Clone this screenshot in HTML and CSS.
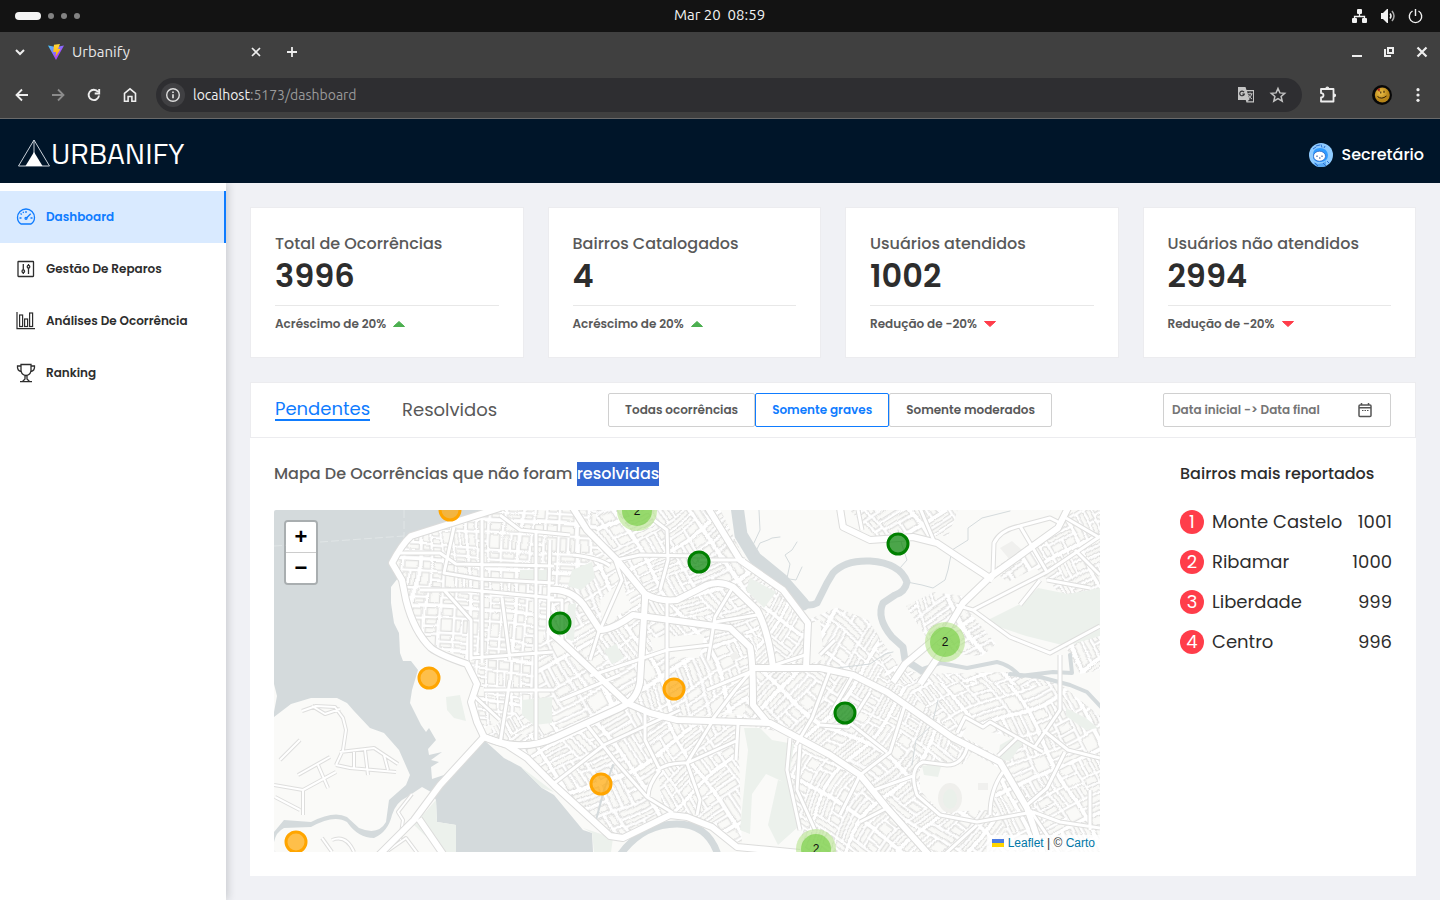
FILE: index.html
```html
<!DOCTYPE html>
<html lang="pt-BR">
<head>
<meta charset="utf-8">
<meta name="viewport" content="width=device-width, initial-scale=1">
<title>Urbanify</title>
<link rel="stylesheet" href="styles.css">
</head>
<body>
<div class="system-bar">
  <div class="workspaces"><span class="workspace workspace-active"></span><span class="workspace"></span><span class="workspace"></span><span class="workspace"></span></div>
  <time class="clock">Mar 20&nbsp; 08:59</time>
  <div class="system-icons">
    <svg width="16" height="16" viewBox="0 0 16 16" fill="#f2f2f2"><rect x="5" y="1" width="5" height="5" rx="1"/><rect x="0" y="10" width="5" height="5" rx="1"/><rect x="10" y="10" width="5" height="5" rx="1"/><path d="M2.500 11V8.500h10V11M7.500 5v4" fill="none" stroke="#f2f2f2" stroke-width="1.300"/></svg>
    <svg width="16" height="16" viewBox="0 0 16 16" fill="#f2f2f2"><path d="M1 5h2l4-4h1v14H7l-4-4H1z"/><path d="M10 5.500q2 2.500 0 5" fill="none" stroke="#f2f2f2" stroke-width="1.500"/><path d="M12 3q4 5 0 10" fill="none" stroke="#aaa" stroke-width="1.500"/></svg>
    <svg width="16" height="16" viewBox="0 0 16 16" fill="none" stroke="#f2f2f2" stroke-width="1.400"><path d="M4.500 3a6.200 6.200 0 1 0 6 0M7.500 1v7"/></svg>
  </div>
</div>

<div class="browser">
  <div class="tab-strip">
    <button class="chrome-btn tab-search" aria-label="Abas"><svg width="16" height="16" viewBox="0 0 16 16" fill="none" stroke="#eee" stroke-width="2"><path d="M4 6l4 4 4-4"/></svg></button>
    <div class="browser-tab">
      <svg width="16" height="16" viewBox="0 0 16 16"><defs><linearGradient id="fav" x1="0" y1="0" x2="1" y2="1"><stop offset="0" stop-color="#41d1ff"/><stop offset="0.600" stop-color="#a04dff"/><stop offset="1" stop-color="#bd34fe"/></linearGradient><linearGradient id="bolt" x1="0" y1="0" x2="0" y2="1"><stop offset="0" stop-color="#ffd83a"/><stop offset="1" stop-color="#ffa800"/></linearGradient></defs><path d="M0 1.500L8 3l8-1.500L8 16z" fill="url(#fav)"/><path d="M6 0.800L12 0l-2 5h2.500L7.500 13l.6-5H5.200z" fill="url(#bolt)"/></svg>
      <span class="tab-title">Urbanify</span>
      <button class="chrome-btn" aria-label="Fechar aba"><svg width="16" height="16" viewBox="0 0 16 16" stroke="#eee" stroke-width="1.700"><path d="M4 4l8 8M12 4l-8 8"/></svg></button>
    </div>
    <button class="chrome-btn new-tab" aria-label="Nova aba"><svg width="16" height="16" viewBox="0 0 16 16" stroke="#eee" stroke-width="1.800"><path d="M8 3v10M3 8h10"/></svg></button>
    <div class="window-buttons">
      <button class="chrome-btn" aria-label="Minimizar"><svg width="16" height="16" viewBox="0 0 16 16" fill="#eee"><path d="M2 11h10v2H2z"/></svg></button>
      <button class="chrome-btn" aria-label="Restaurar"><svg width="16" height="16" viewBox="0 0 16 16" fill="none" stroke="#eee" stroke-width="2"><path d="M6 4h5v5H6zM3 5v7h6"/></svg></button>
      <button class="chrome-btn" aria-label="Fechar"><svg width="16" height="16" viewBox="0 0 16 16" stroke="#eee" stroke-width="2.200"><path d="M3.500 3.500l9 9M12.500 3.500l-9 9"/></svg></button>
    </div>
  </div>
  <div class="address-row">
    <div class="nav-buttons">
      <button class="chrome-btn" aria-label="Voltar"><svg width="16" height="16" viewBox="0 0 16 16" fill="none" stroke="#eee" stroke-width="1.800"><path d="M14 8H3M8 2.500L2.500 8 8 13.500"/></svg></button>
      <button class="chrome-btn" aria-label="Avançar"><svg width="16" height="16" viewBox="0 0 16 16" fill="none" stroke="#8b8b8b" stroke-width="1.800"><path d="M2 8h11M8 2.500L13.500 8 8 13.500"/></svg></button>
      <button class="chrome-btn" aria-label="Recarregar"><svg width="16" height="16" viewBox="0 0 16 16" fill="none" stroke="#eee" stroke-width="1.900"><path d="M13 8.500A5.200 5.200 0 1 1 12 4.800M13.200 2v4.500H8.700"/></svg></button>
      <button class="chrome-btn" aria-label="Início"><svg width="16" height="16" viewBox="0 0 16 16" fill="none" stroke="#eee" stroke-width="1.600"><path d="M2.500 6.300L8 1.800l5.500 4.500V14.200H9.900V9.500H6.100v4.700H2.500z"/></svg></button>
    </div>
    <div class="address-bar">
      <button class="chrome-btn site-info" aria-label="Informações do site"><svg width="16" height="16" viewBox="0 0 16 16" fill="none" stroke="#ddd" stroke-width="1.400"><circle cx="8" cy="8" r="6.300"/><path d="M8 7.300v4M8 4.500v1.500" stroke-width="1.700"/></svg></button>
      <span class="url"><span class="url-host">localhost</span>:5173/dashboard</span>
      <button class="chrome-btn" aria-label="Traduzir"><svg width="18" height="18" viewBox="0 0 18 18"><path d="M1 1h7.500l1 3H17v12.500H9.500L8.700 14H1z" fill="#c4c4c4"/><path d="M10 5.300h6v10h-5.500l2-1.800z" fill="#303034"/><path d="M7 6.200A2.300 2.300 0 1 0 7.300 8H5.300" fill="none" stroke="#303034" stroke-width="1.200"/><path d="M10.500 7.800h5M13 6.500v1.300M11.200 13q3-2 3.500-5M11.500 9q1 2.500 3.500 4" fill="none" stroke="#c4c4c4" stroke-width="1"/></svg></button>
      <button class="chrome-btn" aria-label="Favoritar"><svg width="18" height="18" viewBox="0 0 18 18" fill="none" stroke="#c4c4c4" stroke-width="1.500"><path d="M9 2.500l1.900 4.400 4.800.4-3.600 3.200 1.100 4.700L9 12.700l-4.200 2.500 1.100-4.700-3.600-3.200 4.800-.4z"/></svg></button>
    </div>
    <div class="extension-buttons">
      <button class="chrome-btn" aria-label="Extensões"><svg width="20" height="20" viewBox="0 0 20 20" fill="none" stroke="#eee" stroke-width="1.800" stroke-linejoin="round"><path d="M3 4h12.500v12.500H3v-4q2.500 0 2.500-2.200T3 8.100z"/><path d="M8 3.500q0-1.500 1.300-1.500t1.300 1.500M16 9q1.500 0 1.500 1.300t-1.500 1.300" fill="#eee" stroke-width="1.200"/></svg></button>
      <button class="chrome-btn" aria-label="Perfil"><svg width="20" height="20" viewBox="0 0 20 20"><defs><radialGradient id="smile" cx="0.400" cy="0.350"><stop offset="0" stop-color="#f0c34a"/><stop offset="1" stop-color="#b78518"/></radialGradient></defs><circle cx="10" cy="10" r="10" fill="#080808"/><circle cx="10.300" cy="10" r="7.500" fill="url(#smile)"/><path d="M8.800 6.500v2M12 5.800v2M5.500 11.500q4 3.500 9-.5" fill="none" stroke="#2b1a05" stroke-width="1"/><path d="M5 4.500l3-1.500-.5 4z" fill="#a5211b"/></svg></button>
      <button class="chrome-btn" aria-label="Menu"><svg width="16" height="16" viewBox="0 0 16 16" fill="#eee"><circle cx="8" cy="2.700" r="1.600"/><circle cx="8" cy="8" r="1.600"/><circle cx="8" cy="13.300" r="1.600"/></svg></button>
    </div>
  </div>
</div>

<header class="app-header">
  <a class="brand" href="#"><svg width="34" height="30" viewBox="0 0 34 30"><path d="M1.500 28L17 2l15.500 26zM17 2v14" fill="none" stroke="#c9d0d8" stroke-width="1"/><path d="M17 14l8.500 14h-17z" fill="#fff"/></svg><span class="brand-name">URBANIFY</span></a>
  <a class="account" href="#">
    <svg width="24" height="24" viewBox="0 0 24 24"><defs><clipPath id="face"><circle cx="12" cy="12" r="12"/></clipPath></defs><g clip-path="url(#face)"><path d="M0 0h24v24H0z" fill="#8ecbff"/><path d="M4 12q0-7 7-7t8 7q0 7-8 7t-7-7z" fill="#2f9bff"/><path d="M5 19l4 2 5-1 3-2v6H6z" fill="#5aaaf5"/><path d="M4 6l3-2M7 3l4-1M12 1.500l1 3M16 3l-1 2M6 20l3 3M14 20l3 3M18 18l2 2" stroke="#2f6fce" stroke-width="1"/><ellipse cx="10.500" cy="13.200" rx="6" ry="5" fill="#fff" stroke="#1a56bd" stroke-width="0.700"/><path d="M8 12.500v1.500M13 12.500v1.500M10 15h1.500" stroke="#1a418d" stroke-width="1"/></g></svg>
    <span>Secretário</span>
  </a>
</header>

<div class="app-body">
  <nav class="sidebar">
    <a class="nav-item nav-item-active" href="#"><svg width="20" height="20" viewBox="0 0 20 20" fill="none" stroke="currentColor" stroke-width="1.300"><path d="M5 17Q1.500 14.700 1.500 10.500a8.500 8.500 0 0 1 17 0Q18.500 14.700 15 17z"/><path d="M10 4v2M4.500 6.500l1.300 1M3.500 11h2M14.500 11h2M7 4.800l.6 1.300M14.700 6.700L10.500 11"/><circle cx="10" cy="11.300" r="1"/></svg>Dashboard</a>
    <a class="nav-item" href="#"><svg width="20" height="20" viewBox="0 0 20 20" fill="none" stroke="currentColor" stroke-width="1.300"><rect x="2" y="2.500" width="15.500" height="15" rx="0.500"/><path d="M7.300 5v6M7.300 13.500V15M12.500 5v1.500M12.500 9v6"/><circle cx="7.300" cy="12.200" r="1.300"/><circle cx="12.500" cy="7.700" r="1.300"/></svg>Gestão De Reparos</a>
    <a class="nav-item" href="#"><svg width="20" height="20" viewBox="0 0 20 20" fill="none" stroke="currentColor" stroke-width="1.200"><path d="M1 1v16.600H19"/><rect x="3.600" y="4" width="3" height="11.500"/><rect x="8.600" y="8" width="3" height="7.500"/><rect x="13.600" y="2" width="3" height="13.500"/></svg>Análises De Ocorrência</a>
    <a class="nav-item" href="#"><svg width="20" height="20" viewBox="0 0 20 20" fill="none" stroke="currentColor" stroke-width="1.300"><path d="M5 1.500h10v6Q14.500 12 10 12.500 5.500 12 5 7.500zM5 3H1.500Q1 7.800 5.200 8.500M15 3h3.500Q19 7.800 14.800 8.500M9 12.500v3.500L6.500 18.500M11 12.500v3.500l2.500 2.500M4 18.700h12"/></svg>Ranking</a>
  </nav>

  <main class="content">
    <section class="cards">
      <article class="card"><h2 class="card-title">Total de Ocorrências</h2><p class="card-value">3996</p><p class="card-trend">Acréscimo de 20%<svg width="12" height="6" viewBox="0 0 12 6"><path d="M.5 5.500L6 .5l5.500 5z" fill="#4caf50" stroke="#4caf50" stroke-linejoin="round"/></svg></p></article>
      <article class="card"><h2 class="card-title">Bairros Catalogados</h2><p class="card-value">4</p><p class="card-trend">Acréscimo de 20%<svg width="12" height="6" viewBox="0 0 12 6"><path d="M.5 5.500L6 .5l5.500 5z" fill="#4caf50" stroke="#4caf50" stroke-linejoin="round"/></svg></p></article>
      <article class="card"><h2 class="card-title">Usuários atendidos</h2><p class="card-value">1002</p><p class="card-trend">Redução de -20%<svg width="12" height="6" viewBox="0 0 12 6"><path d="M.5 .5L6 5.500l5.500-5z" fill="#ff3d4a" stroke="#ff3d4a" stroke-linejoin="round"/></svg></p></article>
      <article class="card"><h2 class="card-title">Usuários não atendidos</h2><p class="card-value">2994</p><p class="card-trend">Redução de -20%<svg width="12" height="6" viewBox="0 0 12 6"><path d="M.5 .5L6 5.500l5.500-5z" fill="#ff3d4a" stroke="#ff3d4a" stroke-linejoin="round"/></svg></p></article>
    </section>

    <section class="panel">
      <div class="filters">
        <div class="status-tabs">
          <button class="status-tab status-tab-active">Pendentes</button>
          <button class="status-tab">Resolvidos</button>
        </div>
        <div class="severity">
          <button class="severity-btn">Todas ocorrências</button>
          <button class="severity-btn severity-btn-active">Somente graves</button>
          <button class="severity-btn">Somente moderados</button>
        </div>
        <label class="date-range">
          <input type="text" placeholder="Data inicial -&gt; Data final" aria-label="Período">
          <svg width="16" height="16" viewBox="0 0 16 16" fill="none" stroke="#555" stroke-width="1.500"><rect x="2" y="3" width="12" height="11.500" rx="1"/><path d="M2 5.800h12M4.500 1v2M11.500 1v2"/><path d="M5 8.500h1.500M7.500 8.500h1.500M10 8.500h1.500" stroke-width="1.200"/></svg>
        </label>
      </div>

      <div class="report">
        <div class="map-column">
          <h2 class="map-title">Mapa De Ocorrências que não foram <span class="selected">resolvidas</span></h2>
          <div class="map">
            <svg class="map-canvas" viewBox="274 510 826 342" preserveAspectRatio="xMidYMid slice">
              <defs>
                <pattern id="blocks-a" width="44" height="36" patternUnits="userSpaceOnUse" patternTransform="rotate(3) scale(1.250)">
                  <path class="ground" d="M0 0h44v36H0z"/>
                  <path class="block" d="M2 2h6v6H2zM11 2h7v6h-7zM21 2h8v6h-8zM32 2h10v6H32zM2 11h6v10H2zM11 11h7v4h-7zM11 18h7v4h-7zM21 11h8v10h-8zM32 11h4v10h-4zM39 11h3v10h-3zM2 24h6v4H2zM2 31h6v3H2zM11 25h7v9h-7zM21 24h8v4h-8zM21 31h8v3h-8zM32 24h10v4H32zM32 31h10v3H32z"/>
                </pattern>
                <pattern id="blocks-b" width="48" height="42" patternUnits="userSpaceOnUse" patternTransform="rotate(-32) scale(1.300)">
                  <path class="ground" d="M0 0h48v42H0z"/>
                  <path class="block" d="M2 2h18v3H2zM2 8h18v3H2zM2 14h18v4H2zM23 2h4v16h-4zM30 2h4v16h-4zM37 2h9v7h-9zM37 12h9v6h-9zM2 21h5v19H2zM10 21h4v19h-4zM17 21h4v8h-4zM17 32h4v8h-4zM24 21h22v4H24zM24 28h22v3H24zM24 34h10v6H24zM37 34h9v6h-9z"/>
                </pattern>
                <pattern id="blocks-c" width="50" height="40" patternUnits="userSpaceOnUse" patternTransform="rotate(62) scale(1.300)">
                  <path class="ground" d="M0 0h50v40H0z"/>
                  <path class="block" d="M2 2h14v4H2zM2 9h14v3H2zM2 15h14v4H2zM19 2h14v4H19zM19 9h14v3H19zM19 15h6v10h-6zM28 15h5v10h-5zM36 2h12v10H36zM36 15h5v23h-5zM44 15h4v23h-4zM2 22h14v3H2zM2 28h7v10H2zM12 28h8v10h-8zM23 28h10v4H23zM23 35h10v3H23z"/>
                </pattern>
                <pattern id="blocks-d" width="46" height="38" patternUnits="userSpaceOnUse" patternTransform="rotate(-55) scale(1.300)">
                  <path class="ground" d="M0 0h46v38H0z"/>
                  <path class="block" d="M2 2h19v4H2zM2 9h19v3H2zM2 15h8v9H2zM13 15h8v9h-8zM24 2h4v22h-4zM31 2h13v3H31zM31 8h13v4H31zM31 15h5v9h-5zM39 15h5v9h-5zM2 27h12v3H2zM2 33h12v3H2zM17 27h4v9h-4zM24 27h20v3H24zM24 33h20v3H24z"/>
                </pattern>
                <filter id="bend" x="0" y="0" width="1" height="1" color-interpolation-filters="sRGB">
                  <feTurbulence type="fractalNoise" baseFrequency="0.010" numOctaves="1" seed="8"/>
                  <feDisplacementMap in="SourceGraphic" scale="44" xChannelSelector="R" yChannelSelector="G"/>
                </filter>
                <clipPath id="city">
                  <path d="M397 553L411 535 454 521 502 509H720L746 562 783 592 800 620 833 606 868 620 900 668 920 674 1010 672 1060 684 1100 716V852H800L737 845 690 815 672 812 620 836 609 836 556 782 527 757 484 733 474 712 478 682 462 656 432 646 416 630 404 594 396 566z"/>
                  <path d="M850 510h108l-10 26-76 0zM906 606l28-14 28 4 4 12 30 36-14 12-28-2-26-14zM992 570l60-42 14-20h34v100l-34-8-30-32-28 14zM1062 640l38-14v44l-20 4z"/>
                </clipPath>
                <g id="major-roads">
                  <path d="M500 508L411 536Q402 544 392 563L402 580 406 600Q414 632 431 648 440 655 467 664L477 684 471 702 477 722 484 737 507 745 527 758 554 785 610 836 623 838 670 815 687 817 712 827 737 847 800 853"/>
                  <path d="M484 737Q521 753 554 738L620 708Q637 700 640 682L645 600V594L617 560 587 530 573 508"/>
                  <path d="M484 737L440 785 414 820 378 856M419 819L443 854"/>
                  <path d="M645 594Q660 602 677 600L707 585Q720 580 733 587L757 610Q768 630 773 667M548 590Q574 588 587 610L600 630Q612 630 633 615L730 628 750 647Q753 660 753 705L767 722"/>
                  <path d="M708 508L740 560 783 590 808 623 806 668M755 668H820L853 675 887 692 953 738 1000 762 1027 808 1043 854"/>
                  <path d="M548 630L565 645 627 703 650 713 677 720 770 723 830 755 860 775 887 808 930 856"/>
                  <path d="M840 508L843 527 870 540 913 537 937 543 967 563 993 580M1068 508L1058 528 990 577 963 603 948 628 905 664 893 682M943 650L920 684"/>
                </g>
                <g id="minor-roads">
                  <path d="M482 520V663M454 527L444 573 480 579 554 583M397 553L440 553 456 564 554 566M420 590H470L554 598M444 590L471 620V660M500 515L520 530 570 535M502 598L510 660M536 530V740M550 540L548 640M471 658L553 652M484 690H554M474 696L500 720M500 744L510 680M550 600H562V640"/>
                  <path d="M654 520L667 530 668 560 660 590M617 560L640 555 700 556M573 555Q600 558 610 566M600 630L622 580 615 560M600 628L590 660M667 603V700M590 676L667 650 710 645M707 690L750 672M712 720L735 690 752 670M733 587L715 617 708 660M715 622L757 615M645 713L645 740 660 770M587 725L616 762 647 797 673 813M660 770Q648 785 648 797M656 771Q668 762 687 763L700 800 697 815M687 763L712 722M687 763L736 741M738 724L736 760M552 785L604 745 680 710M560 700L620 675"/>
                  <path d="M790 738L787 770 800 830M800 745L797 790 815 830M830 670L812 718 796 745M853 675L830 715M870 692L848 727 820 725M905 705L890 752 860 775 840 815M887 752L846 720M874 790L913 776M860 822L887 808M700 560L745 560M775 665L805 655M820 655L835 640"/>
                  <path d="M967 748Q962 765 947 765L923 762Q908 768 917 795L940 815 977 822 1033 812 1060 822 1100 828M1003 772Q990 790 990 815M957 733L965 717 983 727 990 722 1043 752M1017 738L998 756M977 825L945 854M1060 655V710L1034 748M1043 730L1068 750 1100 758M1065 752L1047 788 1027 805M1030 810L1060 854M1090 790V830"/>
                  <path d="M920 508L934 541M993 572L994 543Q1000 530 1020 526L1050 518 1062 524M1020 526L1047 572M1102 535L1047 572 973 610 956 605M973 610L1010 637 1050 653 1100 626M1066 518L1100 538M1047 580L1090 588M1075 550L1100 575M1040 580L1020 605M858 510L862 530"/>
                </g>
              </defs>

              <path class="water" d="M274 510h826v342H274z"/>
              <path class="land" d="M502 509L454 520 411 533 402 547 391 563 398 578 391 587 391 603 394 623 399 633 400 653 403 661 411 661 418 670 412 690 410 703 421 725 426 732 429 728 436 740 428 749 429 755 442 752 431 760 439 762 431 767 432 779 444 775 484 740 504 758 521 767 542 788 554 795 583 830 592 833 593 852H1100V510z"/>
              <path class="land" d="M274 717L291 704 311 698 337 698 347 703 354 711 370 728 384 733 399 750 410 775 406 785 389 800 386 822Q378 836 359 828L347 817Q334 810 311 822L284 820 274 832zM274 852V842Q276 832 284 828L311 827Q334 814 347 822 358 838 374 838 388 832 392 815 396 802 407 797L422 787 431 792 436 800 437 822 456 825V852z"/>
              <path class="land" d="M274 684l3 12-3 16z"/>
              <path class="park" d="M436 800l-22 25 28 27h14v-27l-19-3zM592 833l-9-5 30 10-2 14h-17zM504 754l50 38-12-4-21-21z"/>
              <g clip-path="url(#city)">
                <g filter="url(#bend)">
                  <path fill="url(#blocks-a)" d="M340 470h260l-4 80-40 50-6 100-210 90z"/>
                  <path fill="url(#blocks-b)" d="M600 470h260v120l-110 50-105-40-50-50z"/>
                  <path fill="url(#blocks-c)" d="M556 600l40-50 50 50 104 40 10 80-134-14-76 34-80 0 70-40z"/>
                  <path fill="url(#blocks-b)" d="M470 736h80l76-30 134 16 5 160H440z"/>
                  <path fill="url(#blocks-d)" d="M750 590l110-5 50 90 70 80 50 140H750z"/>
                  <path fill="url(#blocks-c)" d="M890 660h240v230h-90l-80-140z"/>
                  <path fill="url(#blocks-b)" d="M850 470h280v210H890z"/>
                </g>
              </g>
              <path class="land" d="M722 508l30 55 34 30 24 26 28-12-12-97zM738 724l54 10-4 40 14 60v16h-60zM920 768l44-4 8-12 30 18-12 40-50 2-20-22zM970 720l14 10 28 8-14 18-36-20zM808 625l12-6 4 40-14 5zM600 600l20-18 12 25-30 18zM650 638l55-4-6 24-44-2zM648 780l10-10 4 38-12-8zM430 664l30 2 13 30 3 30-26 10-22-36z"/>
              <path class="park" d="M744 728h16l12 12 22 4-6 40-22-10-14 20-2 40-10-4 8-80zM778 780l14 5 6 42-20 18-10-20zM984 622l36-18 18-16 30 6 32-6v48l-34 10-40-10zM1000 745l14-8 10 4-14 20-12-2zM572 570l20-8 3 16-14 12-13-4zM568 605l8-2-2 38-8-2zM446 697l14-2 6 26-12-3-7-8zM750 578l26 14-12 16-18-18zM522 700l30-3v26l-18 2-12-10zM922 766l20-3-4 14-14-2zM520 570h28v10h-28zM604 650l12-6 8 14-12 6zM1066 708l20 10 12 10-12 2-20-14z"/>
              <path class="land" d="M652 838l24-8 26 8 6 14h-60z"/>
              <path class="river" stroke-width="13" d="M737 506L741 535 755 558 782 580 803 604"/>
              <path class="river" stroke-width="7" d="M778 582Q800 612 817 603L827 583 833 573Q845 560 870 561 900 563 907 582 905 592 895 595L883 603Q876 618 892 637L903 647 905 660 922 671"/>
              <path class="river" stroke-width="4" d="M905 660L920 670 940 663 967 668 997 662Q1010 665 1020 676L1053 672 1072 673 1070 655M1010 674L1040 677 1070 685 1087 692 1102 708"/>
              <path class="river" stroke-width="7" d="M620 855Q642 824 677 824 708 824 718 855"/>
              <path class="river" stroke-width="1" d="M759 510L760 530 753 545 756 558M755 553L760 543 768 540 772 538 780 537M787 578L790 564 785 555 792 550 797 542M783 578L796 580 802 567M907 582L922 585 933 588 945 580 948 570 952 550 968 540 968 528 982 518 1010 511M900 568L907 560 902 545 898 530M820 670L870 664 885 654 893 652M938 700L932 725 916 740 912 765"/>
              <path class="river" stroke-width="2" d="M613 765L604 790 596 820"/>
              <path class="sea-route" d="M404 510V538M274 546L290 545M320 542L404 536"/>
              <ellipse cx="950" cy="798" rx="12" ry="15" fill="#efefec"/><ellipse cx="950" cy="799" rx="7" ry="10" fill="#eaf0ea"/>
              <path fill="#f0f0ee" d="M1000 548l12-7 10 9-12 10zM978 783h10v7h-10zM730 655l6-4 3 6-6 4z"/>
              <path class="street-edge" d="M302 711L316 706 335 707 343 718 346 730 343 750 336 765M312 706L325 714 340 709M340 752L374 748 398 764M336 765L350 768 396 772M354 752V768M365 750L368 775M384 755L388 770M274 785L303 790 336 772M298 775L330 757M303 790V815M275 797L300 810M318 765L328 788M280 760L300 740M400 840L403 820 398 812 412 794M322 838L332 852M332 840Q346 834 354 852M386 852L406 838 418 854"/>
              <path class="street-fill" d="M302 711L316 706 335 707 343 718 346 730 343 750 336 765M312 706L325 714 340 709M340 752L374 748 398 764M336 765L350 768 396 772M354 752V768M365 750L368 775M384 755L388 770M274 785L303 790 336 772M298 775L330 757M303 790V815M275 797L300 810M318 765L328 788M280 760L300 740M400 840L403 820 398 812 412 794M322 838L332 852M332 840Q346 834 354 852M386 852L406 838 418 854"/>
              <use href="#minor-roads" class="minor-edge"/>
              <use href="#major-roads" class="major-edge"/>
              <use href="#minor-roads" class="minor-fill"/>
              <use href="#major-roads" class="major-fill"/>

              <g class="marker-moderate"><circle cx="450" cy="510" r="10"/><circle cx="429" cy="678" r="10"/><circle cx="674" cy="689" r="10"/><circle cx="601" cy="784" r="10"/><circle cx="296" cy="842" r="10"/></g>
              <g class="marker-resolved"><circle cx="560" cy="623" r="10"/><circle cx="699" cy="562" r="10"/><circle cx="898" cy="544" r="10"/><circle cx="845" cy="713" r="10"/></g>
              <g class="cluster"><circle class="cluster-halo" cx="637" cy="511" r="20"/><circle class="cluster-core" cx="637" cy="511" r="15"/><text x="637" y="515">2</text></g>
              <g class="cluster"><circle class="cluster-halo" cx="945" cy="642" r="20"/><circle class="cluster-core" cx="945" cy="642" r="15"/><text x="945" y="646">2</text></g>
              <g class="cluster"><circle class="cluster-halo" cx="816" cy="849" r="20"/><circle class="cluster-core" cx="816" cy="849" r="15"/><text x="816" y="853">2</text></g>
            </svg>
            <div class="zoom"><button class="zoom-btn" aria-label="Aproximar">+</button><button class="zoom-btn" aria-label="Afastar">−</button></div>
            <div class="attribution"><svg width="12" height="8" viewBox="0 0 12 8"><path fill="#4c7be1" d="M0 0h12v4H0z"/><path fill="#ffd500" d="M0 4h12v4H0z"/></svg> <a href="#">Leaflet</a> | © <a href="#">Carto</a></div>
          </div>
        </div>
        <aside class="ranking">
          <h2 class="ranking-title">Bairros mais reportados</h2>
          <ol class="ranking-list">
            <li class="ranking-row"><span class="badge">1</span><span>Monte Castelo</span><span class="count">1001</span></li>
            <li class="ranking-row"><span class="badge">2</span><span>Ribamar</span><span class="count">1000</span></li>
            <li class="ranking-row"><span class="badge">3</span><span>Liberdade</span><span class="count">999</span></li>
            <li class="ranking-row"><span class="badge">4</span><span>Centro</span><span class="count">996</span></li>
          </ol>
        </aside>
      </div>
    </section>
  </main>
</div>
</body>
</html>
```

FILE: styles.css
```css
* { box-sizing: border-box; }
body {
  margin: 0;
  min-height: 100vh;
  display: flex;
  flex-direction: column;
  font-family: "Poppins", "Inter", sans-serif;
  color: #2d2d2d;
  background: #f0f1f5;
}
h2, p, ol { margin: 0; padding: 0; }
a { color: inherit; text-decoration: none; }
button { font-family: inherit; cursor: pointer; }
svg { display: block; flex: none; }

/* Desktop bar */
.system-bar {
  height: 32px;
  padding: 0 16px 0 15px;
  display: grid;
  grid-template-columns: 1fr auto 1fr;
  align-items: center;
  background: #131313;
  color: #f2f2f2;
  font: 15px/20px "Ubuntu", "Noto Sans", sans-serif;
}
.clock { padding-bottom: 2px; }
.workspaces { display: flex; align-items: center; gap: 7px; }
.workspace { width: 6px; height: 6px; border-radius: 50%; background: #828282; }
.workspace-active { width: 26px; height: 8px; border-radius: 4px; background: #f4f4f4; }
.system-icons { display: flex; justify-content: flex-end; gap: 12px; }

/* Browser frame */
.browser {
  background: #404040;
  color: #e8e8e8;
  border-bottom: 1px solid #6a6a6a;
  font: 14px/20px "Ubuntu", "Noto Sans", sans-serif;
}
.chrome-btn { padding: 0; border: 0; background: none; flex: none; }
.tab-strip { height: 40px; padding: 0 10px 0 12px; display: flex; align-items: center; }
.browser-tab { display: flex; align-items: center; gap: 8px; width: 216px; margin-left: 20px; }
.tab-title { flex: 1; font-size: 15px; }
.new-tab { margin-left: 20px; }
.window-buttons { margin-left: auto; display: flex; gap: 16px; }
.address-row { height: 46px; padding: 0 14px; display: flex; align-items: center; }
.nav-buttons { display: flex; gap: 20px; }
.address-bar {
  flex: 1;
  height: 34px;
  margin-left: 18px;
  padding: 0 15px 0 5px;
  display: flex;
  align-items: center;
  gap: 14px;
  border-radius: 17px;
  background: #2e2e31;
}
.site-info {
  width: 24px;
  height: 24px;
  display: grid;
  place-items: center;
  border-radius: 50%;
  background: #404043;
}
.url { flex: 1; margin-left: -6px; color: #9a9a9a; }
.url-host { color: #f2f2f2; }
.extension-buttons { display: flex; align-items: center; margin-left: 16px; gap: 18px; }
.extension-buttons .chrome-btn:first-child { margin-right: 16px; }

/* Application header */
.app-header {
  height: 64px;
  padding: 0 16px 0 17px;
  display: flex;
  align-items: center;
  justify-content: space-between;
  background: #001529;
  color: #fff;
}
.brand { display: flex; align-items: center; padding-top: 4px; }
.brand-name { font: 30px/40px "Titillium Web", "Noto Sans", sans-serif; }
.account { display: flex; align-items: center; gap: 8px; padding-top: 8px; font-size: 16px; font-weight: 500; line-height: 24px; }

/* Sidebar */
.app-body { flex: 1; display: flex; }
.sidebar {
  width: 226px;
  flex: none;
  padding-top: 8px;
  background: #fff;
  box-shadow: 2px 0 8px rgba(29, 35, 41, 0.18);
  clip-path: inset(0 -16px 0 0);
}
.nav-item {
  height: 52px;
  padding-left: 16px;
  display: flex;
  align-items: center;
  gap: 10px;
  font-size: 12px;
  font-weight: 600;
}
.nav-item-active { background: #d9eaff; color: #0f7cff; border-right: 2px solid #0f7cff; }

/* Summary cards */
.content { flex: 1; min-width: 0; padding: 24px; display: flex; flex-direction: column; gap: 24px; }
.cards { display: grid; grid-template-columns: repeat(4, 1fr); gap: 24px; }
.card { padding: 24px 24px 23px; background: #fff; border: 1px solid #ececef; }
.card-title { font-size: 16px; font-weight: 500; line-height: 24px; color: #595959; }
.card-value { padding-bottom: 9px; border-bottom: 1px solid #e8e8e8; font-size: 32px; font-weight: 600; line-height: 40px; }
.card-trend { padding-top: 8px; display: flex; align-items: center; gap: 7px; font-size: 12px; font-weight: 600; line-height: 20px; color: #595959; }

/* Filters */
.panel { flex: 1; display: flex; flex-direction: column; background: #fff; }
.filters {
  padding: 10px 24px;
  display: flex;
  align-items: center;
  justify-content: space-between;
  border: 1px solid #ececef;
}
.status-tabs { display: flex; align-items: center; gap: 32px; }
.status-tab { padding: 0; border: 0; background: none; font-size: 18px; line-height: 20px; color: #595959; }
.status-tab-active { color: #0f7cff; border-bottom: 2px solid #0f7cff; }
.severity { display: flex; }
.severity-btn {
  height: 34px;
  padding: 0 16px;
  border: 1px solid #d0d0d0;
  border-radius: 2px;
  background: #fff;
  font-size: 12px;
  font-weight: 600;
  color: #595959;
}
.severity-btn-active { border-color: #0f7cff; color: #0f7cff; }
.date-range {
  width: 228px;
  height: 34px;
  padding: 0 17px 0 8px;
  display: flex;
  align-items: center;
  border: 1px solid #d0d0d0;
  border-radius: 2px;
}
.date-range input { flex: 1; min-width: 0; padding: 0; border: 0; outline: 0; background: none; font: 600 12px/18px "Poppins", "Inter", sans-serif; }
.date-range input::placeholder { color: #757575; opacity: 1; }

/* Map and ranking */
.report { flex: 1; padding: 24px; display: grid; grid-template-columns: 1fr 212px; gap: 80px; }
.map-column { display: flex; flex-direction: column; gap: 24px; min-width: 0; }
.map-title, .ranking-title { font-size: 16px; font-weight: 500; line-height: 24px; }
.map-title { color: #595959; }
.selected { display: inline-block; background: #3367d1; color: #fff; }
.map { flex: 1; min-height: 320px; position: relative; overflow: hidden; border-radius: 2px; font-family: "Liberation Sans", Arial, sans-serif; }
.map-canvas { position: absolute; inset: 0; width: 100%; height: 100%; }
.ground { fill: #fff; }
.block { fill: #fafaf8; stroke: #e0e0df; stroke-width: 1; }
.water { fill: #d4dadc; }
.land { fill: #fafaf8; }
.park { fill: #ecf1ec; }
.river { fill: none; stroke: #d4dadc; stroke-linecap: round; stroke-linejoin: round; }
.sea-route { fill: none; stroke: #e0e5e6; stroke-dasharray: 8 3; }
.street-edge, .street-fill, .minor-edge, .minor-fill, .major-edge, .major-fill { fill: none; stroke-linejoin: round; }
.street-edge { stroke: #dededd; stroke-width: 4; }
.street-fill { stroke: #fff; stroke-width: 2; }
.minor-edge { stroke: #dededd; stroke-width: 5; }
.minor-fill { stroke: #fff; stroke-width: 3; }
.major-edge { stroke: #dcdcdb; stroke-width: 8; }
.major-fill { stroke: #fff; stroke-width: 6; }
.marker-moderate { fill: rgba(255, 165, 0, 0.7); stroke: #ffa500; stroke-width: 3; }
.marker-resolved { fill: rgba(0, 128, 0, 0.7); stroke: #008000; stroke-width: 3; }
.cluster-halo { fill: rgba(181, 226, 140, 0.6); }
.cluster-core { fill: rgba(110, 204, 57, 0.6); }
.cluster text { font-size: 12px; text-anchor: middle; fill: #111; }
.zoom {
  position: absolute;
  left: 10px;
  top: 10px;
  display: grid;
  border: 2px solid rgba(0, 0, 0, 0.2);
  background-clip: padding-box;
  border-radius: 4px;
}
.zoom-btn { width: 30px; height: 30px; padding: 0; border: 0; background: #fff; color: #000; font: bold 22px/30px "Liberation Sans", Arial, sans-serif; }
.zoom-btn:first-child { height: 31px; border-bottom: 1px solid #ccc; border-radius: 2px 2px 0 0; }
.zoom-btn:last-child { border-radius: 0 0 2px 2px; }
.attribution { position: absolute; right: 0; bottom: 0; padding: 0 5px; background: rgba(255, 255, 255, 0.8); font-size: 12px; line-height: 17px; color: #333; }
.attribution svg { display: inline-block; }
.attribution a { color: #0078a8; }
.ranking-list { margin-top: 24px; display: grid; gap: 16px; list-style: none; }
.ranking-row { display: flex; align-items: center; gap: 8px; font-size: 18px; line-height: 24px; }
.badge { width: 24px; height: 24px; border-radius: 50%; background: #ff3d4a; color: #fff; text-align: center; }
.count { margin-left: auto; }
```
